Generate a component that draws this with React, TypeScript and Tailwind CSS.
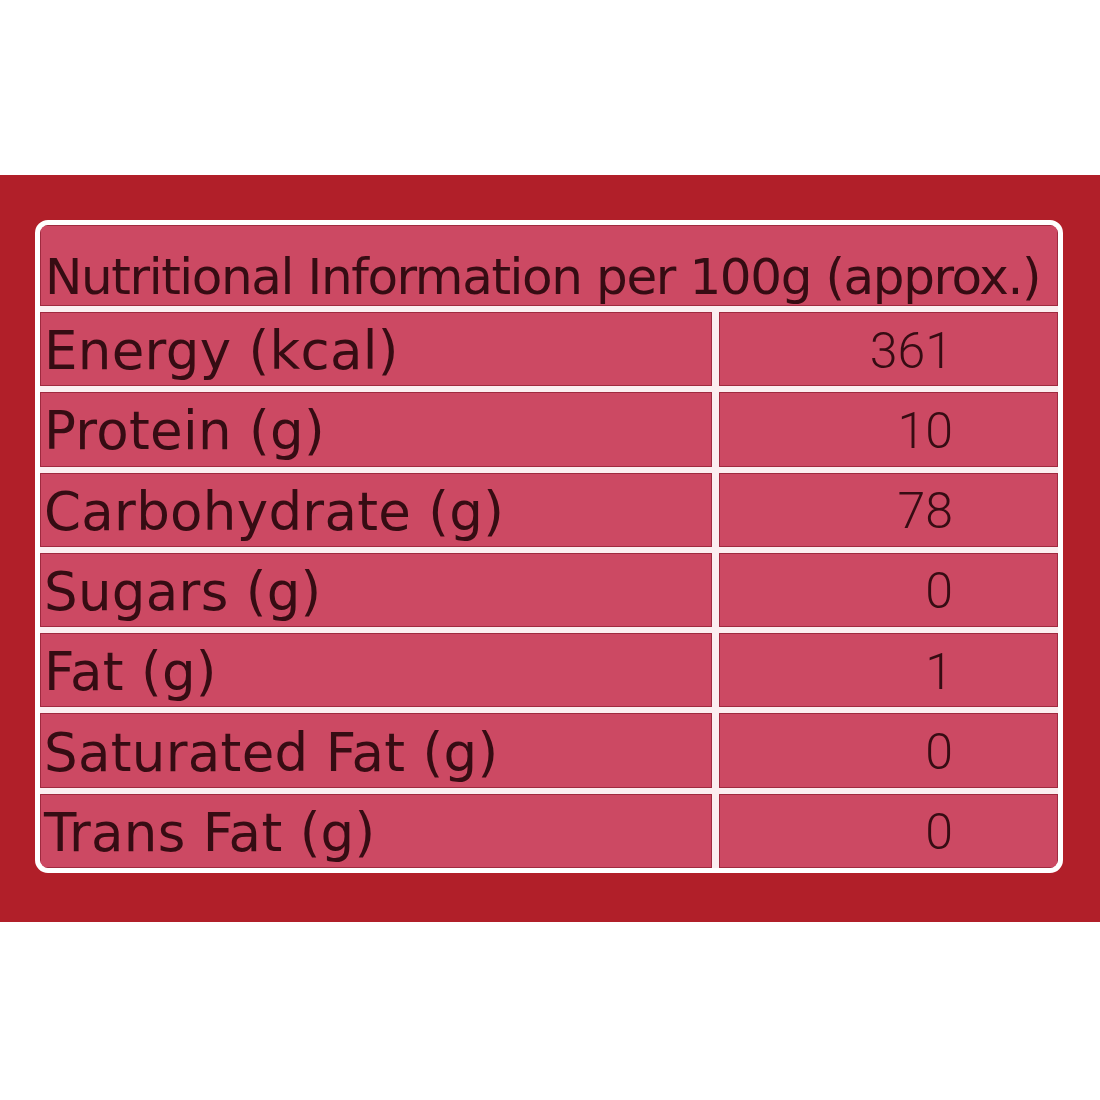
import React from 'react';

const rows = [
    { label: 'Energy (kcal)', value: '361' },
    { label: 'Protein (g)', value: '10' },
    { label: 'Carbohydrate (g)', value: '78' },
    { label: 'Sugars (g)', value: '0' },
    { label: 'Fat (g)', value: '1' },
    { label: 'Saturated Fat (g)', value: '0' },
    { label: 'Trans Fat (g)', value: '0' },
];

export default function App() {
    return (
        <div className="w-[1100px] h-[1100px] bg-white pt-[175px]">
            <div className="h-[747px] bg-[#b11f29] px-[35px] pt-[45px]">
                <div className="w-[1028px] h-[653px] border-[5px] border-white rounded-[13px] bg-[#fbeef0] overflow-hidden">
                    <div className="h-full flex flex-col gap-[6px] rounded-[8px] overflow-hidden">
                        <div className="h-[81px] shrink-0 bg-[#cc4963] border border-[#9f2a3f] flex items-end pb-[3px] pl-[4px]">
                            <span className="font-['DejaVu_Sans',sans-serif] text-[50px] leading-none tracking-[-1.4px] text-[#360c13]">
                                Nutritional Information per 100g (approx.)
                            </span>
                        </div>
                        {rows.map((row) => (
                            <div key={row.label} className="flex-1 flex gap-[7px]">
                                <div className="w-[672px] bg-[#cc4963] border border-[#9f2a3f] flex items-center pl-[3px] pt-[3px]">
                                    <span className="font-['DejaVu_Sans',sans-serif] text-[53px] leading-none tracking-[0.3px] text-[#360c13]">
                                        {row.label}
                                    </span>
                                </div>
                                <div className="flex-1 bg-[#cc4963] border border-[#9f2a3f] flex items-center justify-end pr-[104px] pt-[3px]">
                                    <span className="font-['Roboto',sans-serif] font-light text-[50px] leading-none text-[#360c13]">
                                        {row.value}
                                    </span>
                                </div>
                            </div>
                        ))}
                    </div>
                </div>
            </div>
        </div>
    );
}
